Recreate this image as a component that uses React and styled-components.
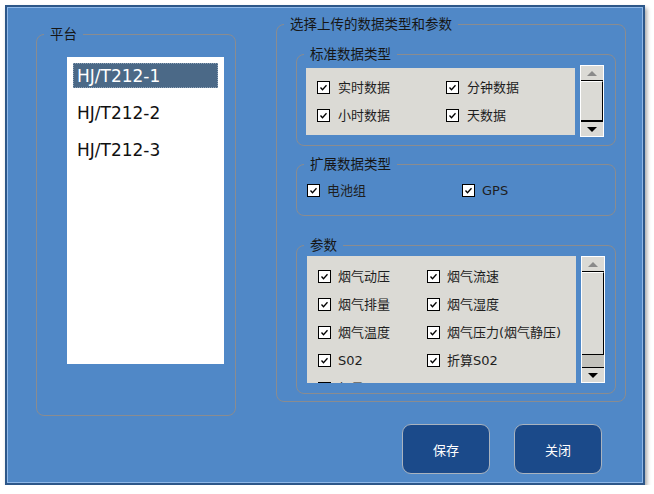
import React from "react";
import styled, { createGlobalStyle } from "styled-components";

const GlobalStyle = createGlobalStyle`
  html, body {
    margin: 0;
    padding: 0;
    background: #ffffff;
  }
  body {
    font-family: "DejaVu Sans", "Noto Sans CJK SC", sans-serif;
    color: #1c1c1c;
  }
`;

const color = {
  panel: "#5088c7",
  dark: "#2d5789",
  light: "#8fb8e8",
  line: "#8a8c90",
  gray: "#dbdad5",
  selected: "#4b6987",
  button: "#1b4a8a"
};

const platforms = ["HJ/T212-1", "HJ/T212-2", "HJ/T212-3"];

const standardTypes = ["实时数据", "分钟数据", "小时数据", "天数据"];

// the last row is cut by the panel's bottom edge, as in the list it copies
const params = [
  "烟气动压",
  "烟气流速",
  "烟气排量",
  "烟气湿度",
  "烟气温度",
  "烟气压力(烟气静压)",
  "S02",
  "折算S02",
  "氧量"
];

const Tick = () => (
  <svg width="11" height="11" viewBox="0 0 11 11">
    <polyline
      points="2.5,5.5 4.5,7.8 8.5,3.2"
      fill="none"
      stroke="#000"
      strokeWidth="1.3"
    />
  </svg>
);

const Check = ({ label, gap }) => (
  <CheckRow $gap={gap}>
    <Box>
      <Tick />
    </Box>
    <span>{label}</span>
  </CheckRow>
);

const ScrollBar = ({ thumb }) => (
  <Scroll>
    <ArrowButton>
      <Arrow $up />
    </ArrowButton>
    <Thumb style={{ height: thumb }} />
    <Track />
    <ArrowButton $bottom>
      <Arrow />
    </ArrowButton>
  </Scroll>
);

export default function App() {
  return (
    <>
      <GlobalStyle />
      <Window>
        <Group $top={18} $width={200}>
          <Legend>平台</Legend>
          <ListBox>
            {platforms.map((p, i) => (
              <ListItem key={p} $active={i === 0}>
                {p}
              </ListItem>
            ))}
          </ListBox>
        </Group>

        <RightColumn>
          <Group $top={8} $width={350}>
            <Legend>选择上传的数据类型和参数</Legend>
            <GroupBody>
              <SubGroup $pad="1px 0 8px 9px">
                <Legend>标准数据类型</Legend>
                <PanelRow>
                  <GrayPanel $height={67}>
                    <CheckGrid $col={129}>
                      {standardTypes.map(t => (
                        <Check key={t} label={t} gap={8} />
                      ))}
                    </CheckGrid>
                  </GrayPanel>
                  <ScrollBar thumb={40} />
                </PanelRow>
              </SubGroup>

              <SubGroup $mt={9} $pad="6px 0 15px 10px">
                <Legend>扩展数据类型</Legend>
                <CheckGrid $col={155} $rowH={20} $padTop={0} $padLeft={0}>
                  <Check label="电池组" gap={7} />
                  <Check label="GPS" gap={7} />
                </CheckGrid>
              </SubGroup>

              <SubGroup $mt={20} $pad="1px 0 10px 10px">
                <Legend>参数</Legend>
                <PanelRow>
                  <GrayPanel $height={127}>
                    <CheckGrid $col={109}>
                      {params.map(t => (
                        <Check key={t} label={t} gap={7} />
                      ))}
                    </CheckGrid>
                  </GrayPanel>
                  <ScrollBar thumb={83} />
                </PanelRow>
              </SubGroup>
            </GroupBody>
          </Group>

          <ButtonBar>
            <ActionButton>保存</ActionButton>
            <ActionButton>关闭</ActionButton>
          </ButtonBar>
        </RightColumn>
      </Window>
    </>
  );
}

const Window = styled.div`
  box-sizing: border-box;
  margin: 5px 0 0 5px;
  width: 640px;
  height: 480px;
  background: ${color.panel};
  border: 2px solid ${color.dark};
  box-shadow: inset 0 0 0 1px ${color.light}, 2px 3px 4px rgba(0, 0, 0, 0.35);
  display: flex;
  align-items: flex-start;
  padding-left: 29px;
  gap: 40px;
`;

const Group = styled.fieldset`
  box-sizing: border-box;
  margin: ${p => p.$top}px 0 0 0;
  padding: 0;
  width: ${p => p.$width}px;
  min-inline-size: 0;
  border: 1px solid ${color.line};
  border-radius: 8px;
`;

const Legend = styled.legend`
  margin-left: 7px;
  padding: 0 6px;
  font-size: 13.5px;
  line-height: 19px;
  color: #161616;
`;

const ListBox = styled.div`
  margin: 13px 0 51px 30px;
  width: 157px;
  height: 307px;
  background: #ffffff;
  padding: 6px;
  box-sizing: border-box;
  display: flex;
  flex-direction: column;
  gap: 12px;
`;

const ListItem = styled.div`
  height: 25px;
  box-sizing: border-box;
  display: flex;
  align-items: center;
  padding-left: 3px;
  font-size: 17px;
  color: ${p => (p.$active ? "#ffffff" : "#111111")};
  background: ${p => (p.$active ? color.selected : "transparent")};
  border: 1px dotted ${p => (p.$active ? "#8fa3b8" : "transparent")};
`;

const RightColumn = styled.div`
  display: flex;
  flex-direction: column;
`;

const GroupBody = styled.div`
  padding: 11px 0 7px 19px;
`;

const SubGroup = styled.fieldset`
  box-sizing: border-box;
  margin: ${p => p.$mt || 0}px 0 0 0;
  padding: ${p => p.$pad};
  width: 320px;
  min-inline-size: 0;
  border: 1px solid ${color.line};
  border-radius: 8px;

  & > legend {
    margin-left: ${p => 7 - parseInt(p.$pad.split(" ")[3], 10)}px;
  }
`;

const PanelRow = styled.div`
  display: flex;
  align-items: center;
  gap: 5px;
`;

const GrayPanel = styled.div`
  width: 269px;
  height: ${p => p.$height}px;
  background: ${color.gray};
  overflow: hidden;
`;

const CheckGrid = styled.div`
  display: grid;
  grid-template-columns: ${p => p.$col}px auto;
  grid-auto-rows: ${p => p.$rowH || 28}px;
  padding: ${p => (p.$padTop ?? 6)}px 0 0 ${p => (p.$padLeft ?? 11)}px;
`;

const CheckRow = styled.div`
  display: flex;
  align-items: center;
  gap: ${p => p.$gap}px;
  font-size: 13px;
  line-height: 1;
  white-space: nowrap;
  color: #1e1e1e;
`;

const Box = styled.span`
  box-sizing: border-box;
  width: 13px;
  height: 13px;
  flex: none;
  background: #ffffff;
  border: 1px solid #000000;
  display: inline-flex;
  align-items: center;
  justify-content: center;
`;

const Scroll = styled.div`
  box-sizing: border-box;
  width: 24px;
  align-self: stretch;
  display: flex;
  flex-direction: column;
  background: #c3c2bc;
  border: 1px solid #ffffff;
`;

const ArrowButton = styled.div`
  height: 14px;
  flex: none;
  background: ${color.gray};
  display: flex;
  align-items: center;
  justify-content: center;
  border-top: ${p => (p.$bottom ? "1px solid #000" : "none")};
  border-bottom: ${p => (p.$bottom ? "none" : "1px solid #000")};
`;

const Arrow = styled.span`
  width: 0;
  height: 0;
  border-left: 5px solid transparent;
  border-right: 5px solid transparent;
  ${p =>
    p.$up
      ? `border-bottom: 5px solid #8a8a8a;`
      : `border-top: 5px solid #000000;`}
`;

const Thumb = styled.div`
  flex: none;
  box-sizing: border-box;
  background: ${color.gray};
  border-top: 1px solid #ffffff;
  border-right: 1px solid #000000;
  border-bottom: 1px solid #000000;
`;

const Track = styled.div`
  flex: 1;
`;

const ButtonBar = styled.div`
  display: flex;
  justify-content: flex-end;
  gap: 24px;
  margin-top: 22px;
  padding-right: 24px;
`;

const ActionButton = styled.button`
  width: 88px;
  height: 50px;
  background: ${color.button};
  border: 1px solid #a9b3bf;
  border-radius: 9px;
  color: #ffffff;
  font-family: "Noto Sans CJK SC", sans-serif;
  font-size: 13px;
  padding: 0;
`;
